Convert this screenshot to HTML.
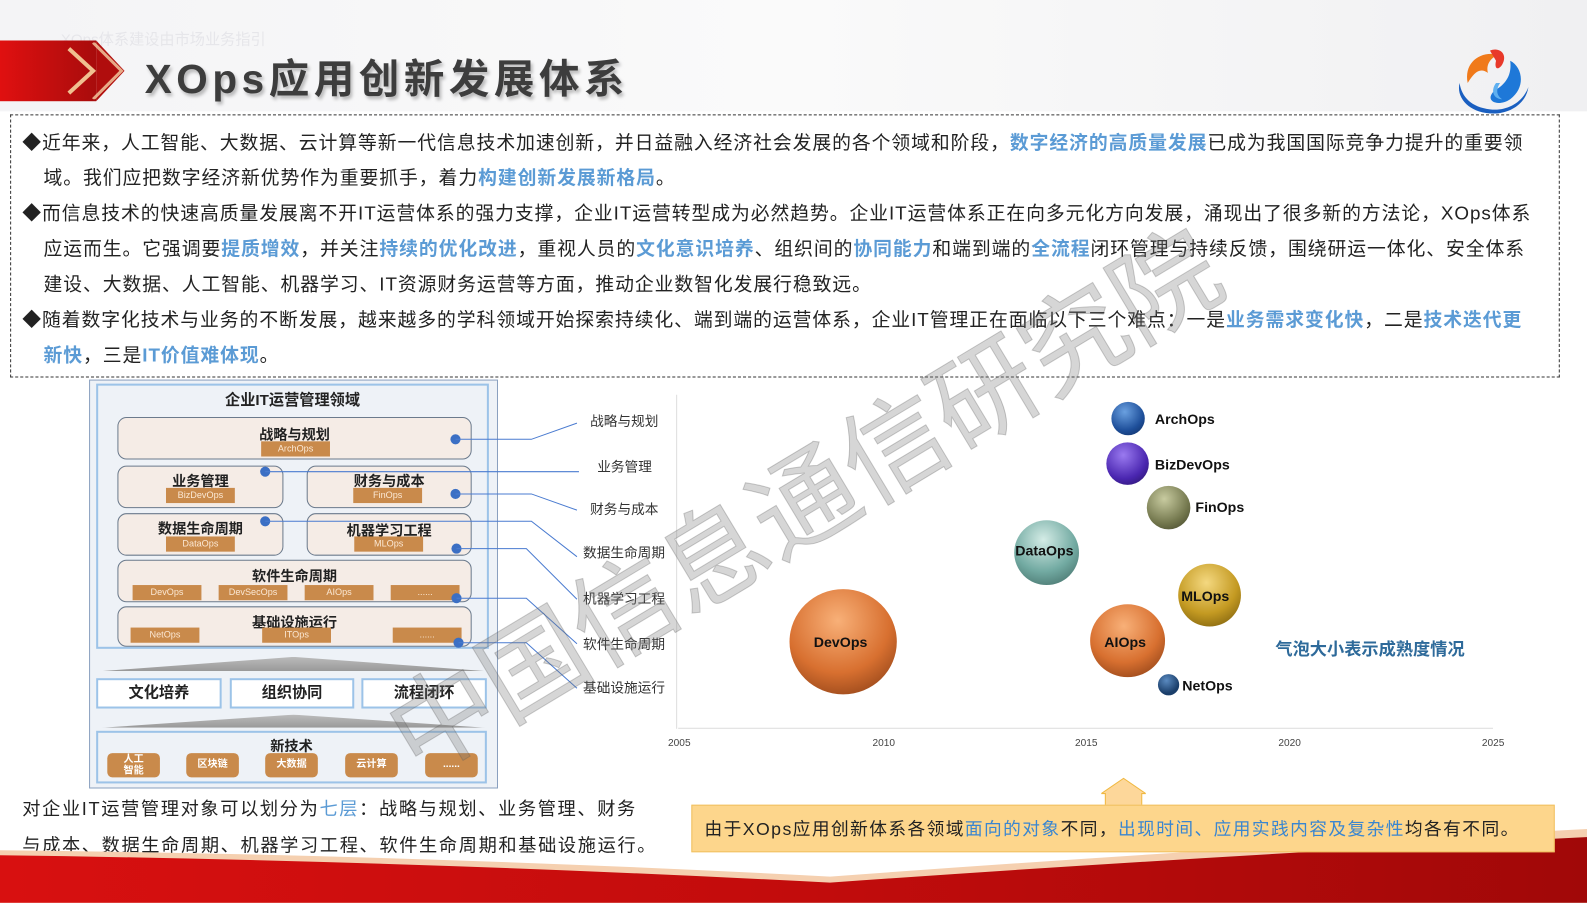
<!DOCTYPE html>
<html><head><meta charset="utf-8"><style>
*{margin:0;padding:0;box-sizing:border-box}
body{width:1587px;height:892px;position:relative;overflow:hidden;background:#fff;font-family:"Liberation Sans","Noto Sans CJK SC",sans-serif;color:#222}
#w{position:absolute;left:0;top:0;width:1568px;height:882px;transform:scale(1.0122);transform-origin:0 0}
.abs{position:absolute}
.bl{color:#5b9bd5;font-weight:bold}
.para{position:absolute;left:22px;width:1500px;font-size:18.6px;line-height:35px;letter-spacing:0.92px;white-space:nowrap}
.para .d{display:inline-block;width:21px}
.box{position:absolute;border:1.5px solid #6b7a8c;border-radius:9px;background:#f5ece6;text-align:center;font-weight:bold;font-size:14px}
.tag{position:absolute;background:#c98a4b;color:#fbe8d4;font-size:9px;height:15px;line-height:15px;text-align:center}
.dot{position:absolute;width:10px;height:10px;border-radius:50%;background:#3b6fc4}
.lab{position:absolute;font-size:13.5px;color:#333}
.ball{position:absolute;border-radius:50%}
.bt{position:absolute;font-weight:bold;font-size:14px;color:#111}
.yr{position:absolute;font-size:10px;color:#444;top:729px}
.mid{position:absolute;border:2px solid #9cc3e8;background:#fff;text-align:center;font-weight:bold;font-size:15px;line-height:26px}
.nt{position:absolute;top:744px;width:52px;height:24px;background:#c98a4b;border-radius:5px;color:#fff;font-size:10px;font-weight:bold;text-align:center;line-height:24px}
</style></head><body><div id="w">
<div class="abs" style="left:0;top:0;width:1568px;height:110px;background:linear-gradient(90deg,#f4f4f6,#fafafa 50%,#f0f0f2)"></div>
<div class="abs" style="left:60px;top:28px;font-size:15px;color:#e6e6ea">XOps体系建设由市场业务指引</div>
<div class="abs" style="left:0;top:40px;width:95px;height:60px;background:linear-gradient(90deg,#e01010,#a80c0c)"></div>
<div class="abs" style="left:95px;top:40px;width:0;height:0;border-top:30px solid transparent;border-bottom:30px solid transparent;border-left:28px solid #b00d0d"></div>
<svg class="abs" style="left:60px;top:42px" width="70" height="56"><polyline points="8,6 32,28 8,50" fill="none" stroke="#f0c090" stroke-width="4"/><polyline points="32,0 60,28 32,56" fill="none" stroke="#f6d1a6" stroke-width="3" opacity=".8"/></svg>
<div class="abs" style="left:143px;top:46px;font-size:40px;font-weight:bold;color:#3d3d3d;letter-spacing:4.5px;text-shadow:2px 3px 3px rgba(0,0,0,.25)">XOps应用创新发展体系</div>
<svg class="abs" style="left:1432px;top:42px" width="85" height="72" viewBox="0 0 85 72">
<path d="M18 40 C14 20 30 8 48 12 C40 16 36 22 38 30 C30 24 24 30 18 40Z" fill="#f07a1a"/>
<path d="M40 8 C50 4 58 12 52 22 C48 28 44 26 46 18Z" fill="#e8392a"/>
<path d="M60 18 C72 24 76 44 60 56 C48 64 34 58 44 48 C54 42 62 34 60 18Z" fill="#1e78d8"/>
<path d="M10 40 C6 56 22 72 48 70 C64 68 76 58 78 44 C72 60 56 68 40 66 C22 64 12 54 10 40Z" fill="#1a5fc0"/>
<path d="M46 40 C40 48 44 56 52 56 C46 52 46 46 50 40Z" fill="#5fb0f0"/>
</svg>
<div class="abs" style="left:10px;top:113px;width:1531px;height:260px;border:1.5px dashed #333"></div>
<div class="para" style="top:123px">
<div>◆近年来，人工智能、大数据、云计算等新一代信息技术加速创新，并日益融入经济社会发展的各个领域和阶段，<span class="bl">数字经济的高质量发展</span>已成为我国国际竞争力提升的重要领<br><span class="d"></span>域。我们应把数字经济新优势作为重要抓手，着力<span class="bl">构建创新发展新格局</span>。</div>
<div>◆而信息技术的快速高质量发展离不开IT运营体系的强力支撑，企业IT运营转型成为必然趋势。企业IT运营体系正在向多元化方向发展，涌现出了很多新的方法论，XOps体系<br><span class="d"></span>应运而生。它强调要<span class="bl">提质增效</span>，并关注<span class="bl">持续的优化改进</span>，重视人员的<span class="bl">文化意识培养</span>、组织间的<span class="bl">协同能力</span>和端到端的<span class="bl">全流程</span>闭环管理与持续反馈，围绕研运一体化、安全体系<br><span class="d"></span>建设、大数据、人工智能、机器学习、IT资源财务运营等方面，推动企业数智化发展行稳致远。</div>
<div>◆随着数字化技术与业务的不断发展，越来越多的学科领域开始探索持续化、端到端的运营体系，企业IT管理正在面临以下三个难点：一是<span class="bl">业务需求变化快</span>，二是<span class="bl">技术迭代更</span><br><span class="d"></span><span class="bl">新快</span>，三是<span class="bl">IT价值难体现</span>。</div>
</div>
<div class="abs" style="left:88px;top:375px;width:404px;height:404px;border:1.5px solid #8aa0bf;background:#eef2f7"></div>
<div class="abs" style="left:95px;top:379px;width:388px;height:262px;border:2px solid #9cc3e8"></div>
<div class="abs" style="left:95px;top:384px;width:388px;text-align:center;font-weight:bold;font-size:15px">企业IT运营管理领域</div>
<div class="box" style="left:116px;top:412px;width:350px;height:42px;padding-top:6px">战略与规划</div><div class="tag" style="left:258px;top:436px;width:68px">ArchOps</div>
<div class="box" style="left:116px;top:460px;width:164px;height:42px;padding-top:4px">业务管理</div><div class="tag" style="left:164px;top:482px;width:68px">BizDevOps</div>
<div class="box" style="left:303px;top:460px;width:163px;height:42px;padding-top:4px">财务与成本</div><div class="tag" style="left:349px;top:482px;width:68px">FinOps</div>
<div class="box" style="left:116px;top:507px;width:164px;height:42px;padding-top:4px">数据生命周期</div><div class="tag" style="left:164px;top:530px;width:68px">DataOps</div>
<div class="box" style="left:303px;top:507px;width:163px;height:42px;padding-top:6px">机器学习工程</div><div class="tag" style="left:350px;top:530px;width:68px">MLOps</div>
<div class="box" style="left:116px;top:553px;width:350px;height:42px;padding-top:5px">软件生命周期</div>
<div class="tag" style="left:131px;top:578px;width:68px">DevOps</div><div class="tag" style="left:216px;top:578px;width:68px">DevSecOps</div><div class="tag" style="left:301px;top:578px;width:68px">AIOps</div><div class="tag" style="left:386px;top:578px;width:68px">......</div>
<div class="box" style="left:116px;top:599px;width:350px;height:40px;padding-top:5px">基础设施运行</div>
<div class="tag" style="left:129px;top:620px;width:68px">NetOps</div><div class="tag" style="left:259px;top:620px;width:68px">ITOps</div><div class="tag" style="left:388px;top:620px;width:68px">......</div>
<div class="abs" style="left:100px;top:649px;width:380px;height:14px;background:linear-gradient(#bbb,#999);clip-path:polygon(0 100%,50% 0,100% 100%)"></div>
<div class="mid" style="left:95px;top:670px;width:124px;height:30px">文化培养</div>
<div class="mid" style="left:227px;top:670px;width:123px;height:30px">组织协同</div>
<div class="mid" style="left:357px;top:670px;width:124px;height:30px">流程闭环</div>
<div class="abs" style="left:100px;top:706px;width:380px;height:13px;background:linear-gradient(#bbb,#999);clip-path:polygon(0 100%,50% 0,100% 100%)"></div>
<div class="abs" style="left:95px;top:722px;width:386px;height:52px;border:2px solid #9cc3e8;background:#eef2f7"></div>
<div class="abs" style="left:95px;top:727px;width:386px;text-align:center;font-weight:bold;font-size:14px">新技术</div>
<div class="nt" style="left:106px;line-height:11px;padding-top:1px">人工<br>智能</div><div class="nt" style="left:184px">区块链</div><div class="nt" style="left:262px">大数据</div><div class="nt" style="left:341px">云计算</div><div class="nt" style="left:420px">......</div>
<div class="dot" style="left:445px;top:429px"></div><div class="dot" style="left:257px;top:461px"></div><div class="dot" style="left:445px;top:483px"></div>
<div class="dot" style="left:257px;top:510px"></div><div class="dot" style="left:446px;top:537px"></div><div class="dot" style="left:446px;top:586px"></div><div class="dot" style="left:448px;top:630px"></div>
<svg class="abs" style="left:0;top:0" width="600" height="700"><g stroke="#4a7bd0" stroke-width="1" fill="none">
<polyline points="450,434 525,434 570,418"/><polyline points="262,466 572,466"/><polyline points="450,488 525,488 570,504"/>
<polyline points="262,515 525,515 570,550"/><polyline points="451,542 520,542 570,592"/><polyline points="451,591 520,591 570,636"/><polyline points="453,635 520,635 570,680"/></g></svg>
<div class="abs" style="left:572px;top:379px;width:922px;height:370px;background:#fff"></div>
<div class="abs" style="left:668px;top:390px;width:1px;height:330px;background:#ddd"></div>
<div class="abs" style="left:670px;top:719px;width:805px;height:1px;background:#ddd"></div>
<div class="lab" style="left:583px;top:405px">战略与规划</div><div class="lab" style="left:590px;top:450px">业务管理</div><div class="lab" style="left:583px;top:492px">财务与成本</div>
<div class="lab" style="left:576px;top:535px">数据生命周期</div><div class="lab" style="left:576px;top:580px">机器学习工程</div><div class="lab" style="left:576px;top:625px">软件生命周期</div><div class="lab" style="left:576px;top:668px">基础设施运行</div>
<div class="yr" style="left:660px">2005</div><div class="yr" style="left:862px">2010</div><div class="yr" style="left:1062px">2015</div><div class="yr" style="left:1263px">2020</div><div class="yr" style="left:1464px">2025</div>
<div class="ball" style="left:1098px;top:397px;width:33px;height:33px;background:radial-gradient(circle at 40% 30%,#6aa0e0,#1e4f9a 60%,#0e2a5a)"></div><div class="bt" style="left:1141px;top:406px">ArchOps</div>
<div class="ball" style="left:1093px;top:437px;width:42px;height:42px;background:radial-gradient(circle at 40% 30%,#9a7af0,#4a26b0 60%,#22105a)"></div><div class="bt" style="left:1141px;top:451px">BizDevOps</div>
<div class="ball" style="left:1133px;top:480px;width:43px;height:43px;background:radial-gradient(circle at 40% 30%,#c8cba0,#74784e 60%,#3c3e24)"></div><div class="bt" style="left:1181px;top:493px">FinOps</div>
<div class="ball" style="left:1002px;top:514px;width:64px;height:64px;background:radial-gradient(circle at 45% 30%,#d4ece6,#72aaa2 55%,#3a625c)"></div><div class="bt" style="left:1003px;top:536px">DataOps</div>
<div class="ball" style="left:1164px;top:557px;width:62px;height:62px;background:radial-gradient(circle at 45% 30%,#f4d880,#c49a22 55%,#6a5008)"></div><div class="bt" style="left:1167px;top:581px">MLOps</div>
<div class="ball" style="left:780px;top:582px;width:106px;height:104px;background:radial-gradient(circle at 45% 30%,#f8b078,#d87030 55%,#7a3410)"></div><div class="bt" style="left:804px;top:626px">DevOps</div>
<div class="ball" style="left:1077px;top:597px;width:74px;height:72px;background:radial-gradient(circle at 45% 30%,#f8b078,#d87030 55%,#7a3410)"></div><div class="bt" style="left:1091px;top:626px">AIOps</div>
<div class="ball" style="left:1144px;top:666px;width:21px;height:21px;background:radial-gradient(circle at 40% 30%,#5a8ac0,#1a3e6a 65%)"></div><div class="bt" style="left:1168px;top:669px">NetOps</div>
<div class="abs" style="left:1260px;top:627px;font-size:17px;font-weight:bold;color:#2e6a9a">气泡大小表示成熟度情况</div>
<div class="abs" style="left:22px;top:781px;font-size:18px;line-height:36px;color:#222;letter-spacing:1.6px;white-space:nowrap">对企业IT运营管理对象可以划分为<span style="color:#5b9bd5">七层</span>：战略与规划、业务管理、财务<br>与成本、数据生命周期、机器学习工程、软件生命周期和基础设施运行。</div>
<svg class="abs" style="left:0;top:800px" width="1587" height="92" viewBox="0 0 1587 92"><defs><linearGradient id="r" x1="0" x2="1"><stop offset="0" stop-color="#d81010"/><stop offset=".5" stop-color="#c20c0c"/><stop offset="1" stop-color="#a00808"/></linearGradient></defs>
<path d="M0 40 Q400 44 820 66 Q1200 38 1587 18 L1587 92 L0 92Z" fill="#f5d0b0"/>
<path d="M0 45 Q400 50 820 72 Q1200 45 1587 26 L1587 92 L0 92Z" fill="url(#r)"/></svg>
<svg class="abs" style="left:1088px;top:768px" width="44" height="30"><path d="M4 30 L4 16 L0 16 L22 1 L44 16 L40 16 L40 30Z" fill="#fdd79a" stroke="#f0b840" stroke-width="1"/></svg>
<div class="abs" style="left:683px;top:795px;width:853px;height:47px;background:#fdd68c;border:1px solid #f0c060;font-size:17.5px;line-height:47px;padding-left:12px;color:#222;letter-spacing:1.4px;white-space:nowrap">由于XOps应用创新体系各领域<span style="color:#3a86d0">面向的对象</span>不同，<span style="color:#3a86d0">出现时间、应用实践内容及复杂性</span>均各有不同。</div>
<div class="abs" style="font-size:104px;color:rgba(120,120,120,.3);transform:rotate(-31deg);transform-origin:0 0;white-space:nowrap;top:665px;left:350px;-webkit-text-stroke:1px rgba(90,90,90,.3)">中国信息通信研究院</div>
</div></body></html>
